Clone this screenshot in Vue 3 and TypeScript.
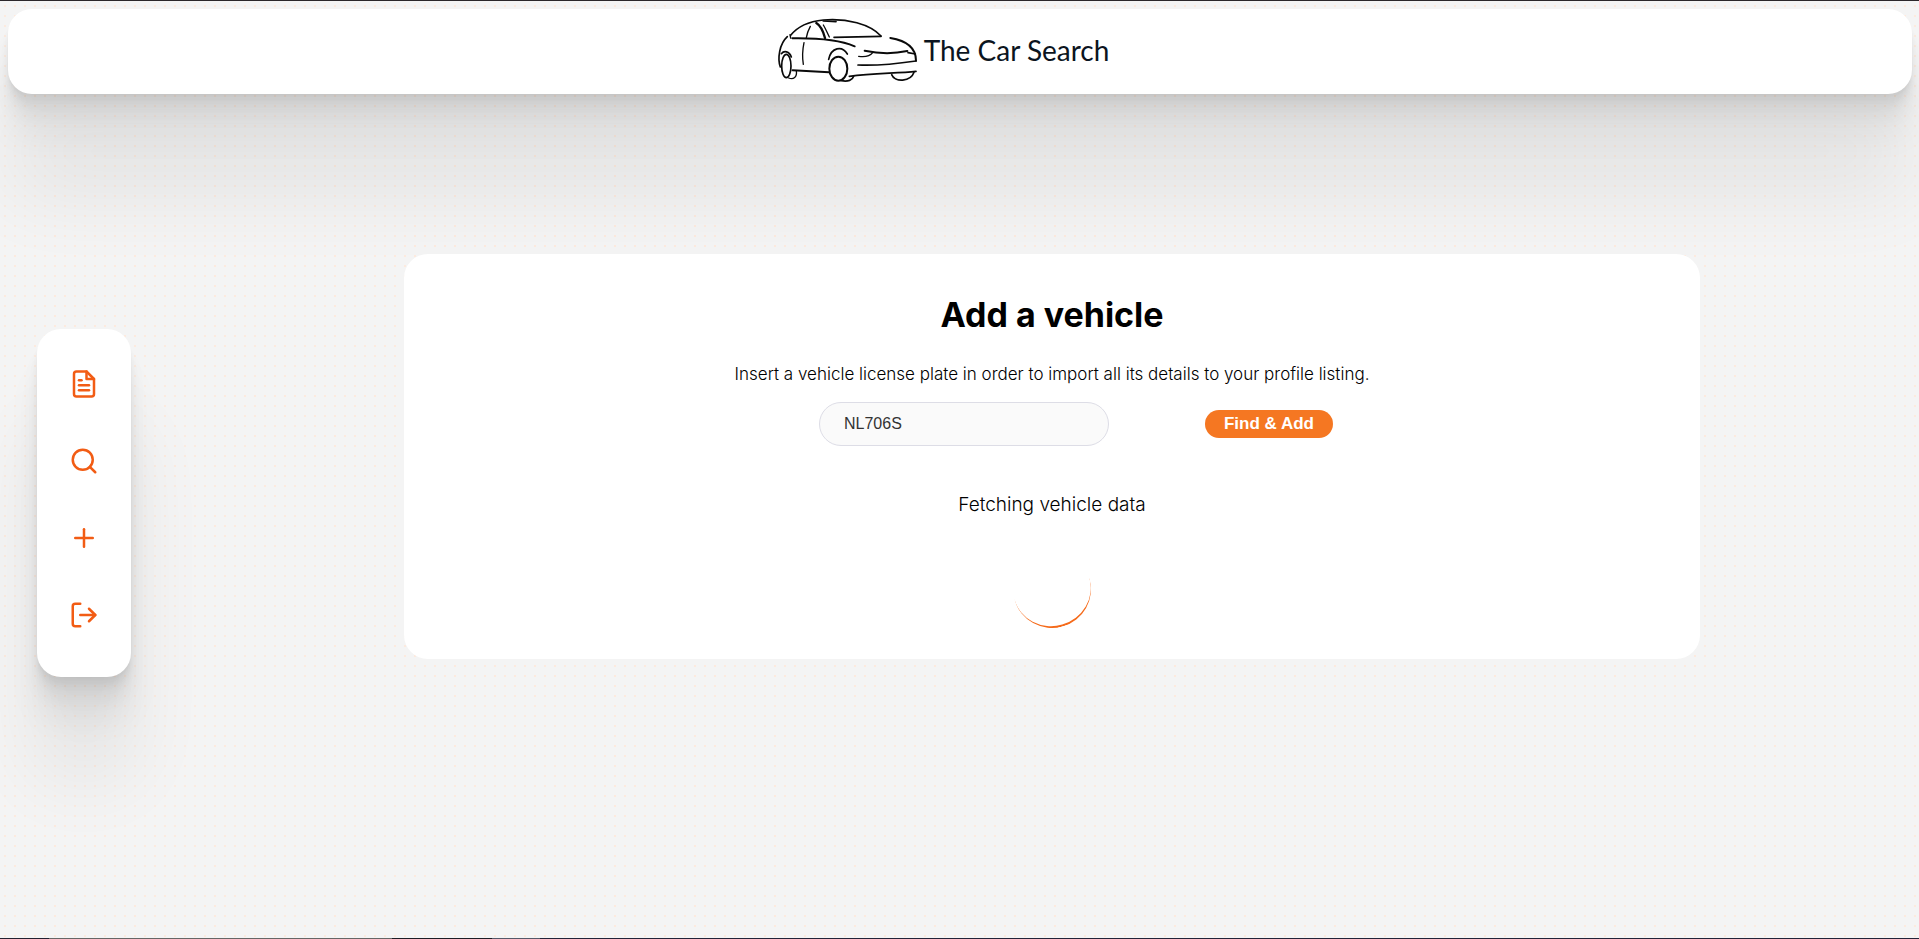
<script setup lang="ts">
import { ref } from 'vue'

interface NavItem {
  label: string
  paths: string[]
}

const navItems: NavItem[] = [
  {
    label: 'Listings',
    paths: [
      'M14 2H6a2 2 0 0 0-2 2v16a2 2 0 0 0 2 2h12a2 2 0 0 0 2-2V8z',
      'M14 2v6h6',
      'M16 13H8',
      'M16 17H8',
      'M10 9H8',
    ],
  },
  { label: 'Search', paths: ['M19 11a8 8 0 1 1-16 0a8 8 0 1 1 16 0z', 'M21 21l-4.35-4.35'] },
  { label: 'Add vehicle', paths: ['M12 5v14', 'M5 12h14'] },
  { label: 'Log out', paths: ['M9 21H5a2 2 0 0 1-2-2V5a2 2 0 0 1 2-2h4', 'M16 17l5-5-5-5', 'M21 12H9'] },
]

const plate = ref('NL706S')
</script>

<template>
  <div class="page">
    <header class="topbar">
      <a class="brand" href="#">
        <svg class="car" viewBox="0 0 456 240" fill="none" stroke="#0a0a0a" stroke-width="5" stroke-linecap="round" aria-hidden="true">
          <path d="M62 76C84 48 120 34 160 30C230 24 300 42 333 78" />
          <path d="M160 33L198 35" />
          <path d="M192 82L333 79" />
          <path d="M67 85C130 84 205 88 254 109" stroke-width="6" />
          <path d="M121 49C115 60 111 70 109 83" stroke-width="4" />
          <path d="M139 39C154 48 160 65 165 84" stroke-width="7" />
          <path d="M160 45C168 58 172 70 178 81" stroke-width="4" />
          <path d="M60 74L62 84" stroke-width="4" />
          <path d="M52 80C28 102 22 145 31 171" />
          <path d="M102 98C97 122 97 145 100 163" stroke-width="4" />
          <path d="M34 131C42 121 58 123 64 141" />
          <ellipse cx="49" cy="168" rx="14" ry="35" />
          <path d="M56 204C70 210 82 202 79 182" stroke-width="4" />
          <path d="M68 181L177 187" stroke-width="6" />
          <path d="M176 148C184 112 216 106 232 132" />
          <ellipse cx="205" cy="176" rx="27" ry="36" stroke-width="6" />
          <path d="M214 212C234 216 248 210 251 199" />
          <path d="M238 199C310 190 380 190 438 184" />
          <path d="M264 165C330 168 390 160 438 153" />
          <path d="M361 84C410 92 438 112 438 152" stroke-width="6" />
          <path d="M284 122C330 132 370 132 412 123" stroke-width="6" />
          <path d="M309 127C300 138 284 142 266 139" stroke-width="4" />
          <path d="M414 128L436 132" />
          <path d="M365 194C374 218 422 216 432 187" />
        </svg>
        <span class="brand-name">The Car Search</span>
      </a>
    </header>

    <div class="body">
      <nav class="sidebar" aria-label="Main">
        <a v-for="item in navItems" :key="item.label" href="#" :aria-label="item.label">
          <svg viewBox="0 0 24 24" aria-hidden="true">
            <path v-for="d in item.paths" :key="d" :d="d" />
          </svg>
        </a>
      </nav>

      <main class="card">
        <h1>Add a vehicle</h1>
        <p class="intro">Insert a vehicle license plate in order to import all its details to your profile listing.</p>
        <form class="lookup" @submit.prevent>
          <input v-model="plate" type="text" aria-label="License plate" />
          <button type="submit">Find &amp; Add</button>
        </form>
        <p class="status" role="status">Fetching vehicle data</p>
        <div class="spinner"></div>
      </main>
    </div>
  </div>
</template>

<style>
body {
  margin: 0;
}
</style>

<style scoped>
.page {
  --shadow: 0 3px 2px rgba(0, 0, 0, 0.02), 0 7px 5px rgba(0, 0, 0, 0.028),
    0 12px 10px rgba(0, 0, 0, 0.035), 0 22px 18px rgba(0, 0, 0, 0.042),
    0 42px 33px rgba(0, 0, 0, 0.05), 0 100px 80px rgba(0, 0, 0, 0.07);
  box-sizing: border-box;
  min-height: 100vh;
  padding: 8px 7px 8px 8px;
  border-top: 1px solid #2b272b;
  border-bottom: 1px solid transparent;
  overflow: hidden;
  background:
    linear-gradient(90deg, #222030 49px, #666 49px 392px, #1c1c24 392px 492px, #555868 492px 540px, #222338 540px)
      0 100% / 100% 1px no-repeat border-box,
    radial-gradient(circle at center, #fdeade 1px, transparent 1px) 0 0 / 10px 10px padding-box,
    #f4f4f4;
  font-family: Inter, "Open Sans", sans-serif;
  color: #000;
}

.topbar {
  display: flex;
  justify-content: center;
  height: 85px;
  border-radius: 24px;
  background: #fff;
  box-shadow: var(--shadow);
}

.brand {
  display: flex;
  align-items: center;
  gap: 2px;
  padding: 0 41px 3px 0;
  color: #0b1420;
  text-decoration: none;
}

.car {
  width: 152px;
  height: 80px;
}

.brand-name {
  font: 400 28px/36px Lato, sans-serif;
}

.body {
  display: grid;
  grid-template-columns: 94px minmax(0, 1296px);
  justify-content: space-between;
  align-items: start;
  padding: 160px 212px 0 29px;
}

.sidebar {
  display: flex;
  flex-direction: column;
  gap: 47px;
  align-items: center;
  margin-top: 75px;
  padding: 40px 0 47px;
  border-radius: 24px;
  background: #fff;
  box-shadow: var(--shadow);
}

.sidebar a,
.sidebar svg {
  display: block;
  width: 30px;
  height: 30px;
}

.sidebar svg {
  fill: none;
  stroke: #f25c14;
  stroke-width: 2;
  stroke-linecap: round;
  stroke-linejoin: round;
}

.card {
  position: relative;
  display: flex;
  flex-direction: column;
  align-items: center;
  padding: 37px 24px 31px;
  border-radius: 24px;
  background: #fff;
}

h1 {
  margin: 0;
  font-size: 34px;
  font-weight: 700;
  line-height: 48px;
}

.intro {
  margin: 23px 0 16px;
  font-size: 17px;
  font-weight: 300;
  line-height: 24px;
}

.lookup {
  display: flex;
  align-items: center;
  gap: 96px;
  padding-left: 48px;
}

input {
  box-sizing: border-box;
  width: 290px;
  height: 44px;
  padding: 0 24px;
  border: 1px solid #dddde6;
  border-radius: 22px;
  background: #fafafa;
  color: #333;
  font: 16px "Liberation Sans", sans-serif;
}

button {
  width: 128px;
  height: 28px;
  padding: 0;
  border: 0;
  border-radius: 14px;
  background: #f57722;
  color: #fff;
  font: 700 17px "Liberation Sans", sans-serif;
}

.status {
  margin: 45px 0 31px;
  font-size: 19px;
  font-weight: 300;
  line-height: 28px;
}

.spinner {
  box-sizing: border-box;
  width: 78px;
  height: 78px;
  border-bottom: 2px solid #f56a1a;
  border-radius: 50%;
  transform: rotate(-16deg);
}
</style>
